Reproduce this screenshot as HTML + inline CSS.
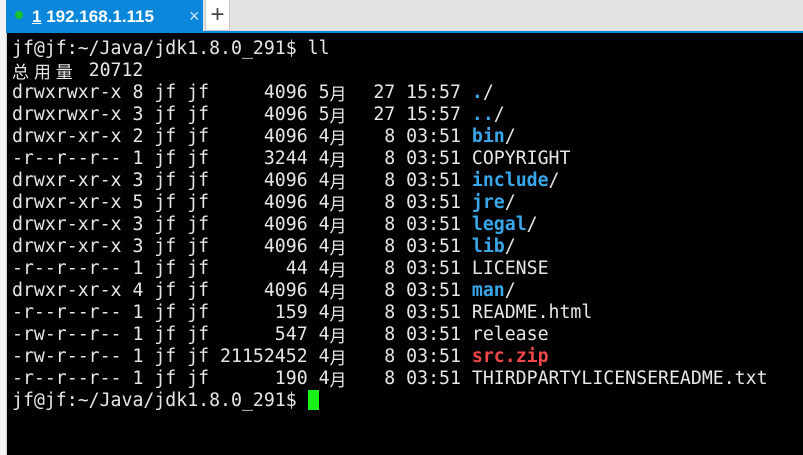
<!DOCTYPE html>
<html><head><meta charset="utf-8"><style>
body{margin:0;width:803px;height:455px;overflow:hidden;background:#000;position:relative;font-family:"DejaVu Sans Mono","Noto Sans CJK SC",monospace}
#bar{position:absolute;left:0;top:0;width:803px;height:31px;background:#e2e2e2}
#blue{position:absolute;left:0;top:31px;width:803px;height:2px;background:#0a86db}
#lstrip{position:absolute;left:0;top:0;width:6px;height:455px;background:#f4f4f4;border-right:1px solid #cfcfcf}
#tab{position:absolute;left:6px;top:0;width:197px;height:33px;background:#0a86db;color:#fff;font:bold 17px "Liberation Sans",sans-serif}
#dot{position:absolute;left:9px;top:11px;width:8px;height:8px;border-radius:50%;background:#17c22a}
#tt{position:absolute;left:26px;top:7px}
#x{position:absolute;left:183px;top:6px;color:#cde5f7;font:18px "Liberation Sans",sans-serif}
#plus{position:absolute;left:205px;top:0;width:23px;height:30px;background:#fff;border:1px solid #c8c8c8;border-top:none;font:24px "Liberation Sans",sans-serif;color:#444;text-align:center;line-height:29px}
#term{position:absolute;left:12px;top:38px;color:#e6e6e6;font-size:18.2px;line-height:22px}
#term div{height:22px;white-space:pre;overflow:visible}
.b{color:#3aa7ea;font-weight:bold}
.r{color:#f04848;font-weight:bold}
.m{display:inline-block;width:21.9px;height:22px;font-family:"Noto Sans CJK SC",sans-serif;font-size:17px;line-height:22px;vertical-align:top}
.c{display:inline-block;width:10.95px;height:20px;background:#19f219;vertical-align:-4px}
</style></head><body>
<div id="bar"></div><div id="blue"></div>
<div id="lstrip"></div>
<div id="tab"><div id="dot"></div><div id="tt"><u>1</u> 192.168.1.115</div><div id="x">×</div></div>
<div id="plus">+</div>
<div id="term">
<div>jf@jf:~/Java/jdk1.8.0_291$ ll</div>
<div><span class="m">总</span><span class="m">用</span><span class="m">量</span> 20712</div>
<div>drwxrwxr-x 8 jf jf     4096 5<span class="m">月</span>  27 15:57 <span class="b">.</span>/</div>
<div>drwxrwxr-x 3 jf jf     4096 5<span class="m">月</span>  27 15:57 <span class="b">..</span>/</div>
<div>drwxr-xr-x 2 jf jf     4096 4<span class="m">月</span>   8 03:51 <span class="b">bin</span>/</div>
<div>-r--r--r-- 1 jf jf     3244 4<span class="m">月</span>   8 03:51 COPYRIGHT</div>
<div>drwxr-xr-x 3 jf jf     4096 4<span class="m">月</span>   8 03:51 <span class="b">include</span>/</div>
<div>drwxr-xr-x 5 jf jf     4096 4<span class="m">月</span>   8 03:51 <span class="b">jre</span>/</div>
<div>drwxr-xr-x 3 jf jf     4096 4<span class="m">月</span>   8 03:51 <span class="b">legal</span>/</div>
<div>drwxr-xr-x 3 jf jf     4096 4<span class="m">月</span>   8 03:51 <span class="b">lib</span>/</div>
<div>-r--r--r-- 1 jf jf       44 4<span class="m">月</span>   8 03:51 LICENSE</div>
<div>drwxr-xr-x 4 jf jf     4096 4<span class="m">月</span>   8 03:51 <span class="b">man</span>/</div>
<div>-r--r--r-- 1 jf jf      159 4<span class="m">月</span>   8 03:51 README.html</div>
<div>-rw-r--r-- 1 jf jf      547 4<span class="m">月</span>   8 03:51 release</div>
<div>-rw-r--r-- 1 jf jf 21152452 4<span class="m">月</span>   8 03:51 <span class="r">src.zip</span></div>
<div>-r--r--r-- 1 jf jf      190 4<span class="m">月</span>   8 03:51 THIRDPARTYLICENSEREADME.txt</div>
<div>jf@jf:~/Java/jdk1.8.0_291$ <span class="c"></span></div>
</div>
</body></html>
